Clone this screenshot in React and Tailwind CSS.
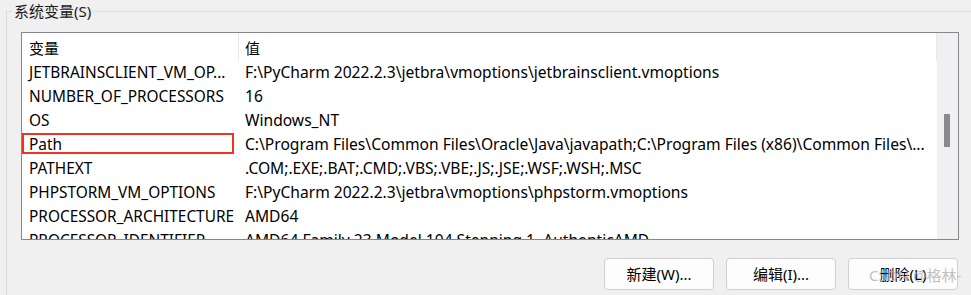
import React from 'react';

const rows = [
  ['JETBRAINSCLIENT_VM_OP...', 'F:\\PyCharm 2022.2.3\\jetbra\\vmoptions\\jetbrainsclient.vmoptions'],
  ['NUMBER_OF_PROCESSORS', '16'],
  ['OS', 'Windows_NT'],
  ['Path', 'C:\\Program Files\\Common Files\\Oracle\\Java\\javapath;C:\\Program Files (x86)\\Common Files\\...'],
  ['PATHEXT', '.COM;.EXE;.BAT;.CMD;.VBS;.VBE;.JS;.JSE;.WSF;.WSH;.MSC'],
  ['PHPSTORM_VM_OPTIONS', 'F:\\PyCharm 2022.2.3\\jetbra\\vmoptions\\phpstorm.vmoptions'],
  ['PROCESSOR_ARCHITECTURE', 'AMD64'],
  ['PROCESSOR_IDENTIFIER', 'AMD64 Family 23 Model 104 Stepping 1, AuthenticAMD'],
];

const font = { fontFamily: '"Noto Sans", "Noto Sans CJK SC", sans-serif' };

export default function App() {
  return (
    <div className="h-[295px] w-[971px] overflow-hidden bg-[#f0f0f0] text-black" style={font}>
      <div className="relative ml-[6px] mt-[11px] h-[300px] border-l border-t border-[#dcdcdc]">
        <span className="absolute left-[5px] top-[-12px] bg-[#f0f0f0] px-[2px] text-[15px] leading-[22px] text-[#1a1a1a]">
          系统变量(S)
        </span>

        <div className="ml-[14px] mt-[20px] flex h-[208px] w-[938px] border border-[#828790] bg-white">
          <div className="flex-1 overflow-hidden">
            <div className="flex h-[28px] items-center text-[15px]">
              <div className="flex h-full w-[217px] shrink-0 items-center border-r border-[#e8e8e8] pl-[7px] pt-[2px]">变量</div>
              <div className="flex h-full flex-1 items-center border-r border-[#e8e8e8] pl-[6px] pt-[2px]">值</div>
            </div>
            {rows.map(([name, value]) => (
              <div key={name} className="flex h-[24px] items-center whitespace-nowrap text-[15.4px]">
                <div className="relative flex h-full w-[217px] shrink-0 items-center pl-[7px]">
                  {name}
                  {name === 'Path' && (
                    <div className="absolute left-0 top-[0px] h-[21px] w-[212px] border-2 border-[#ee3322]" />
                  )}
                </div>
                <div className="flex h-full flex-1 items-center overflow-hidden pl-[6px] text-[15.6px]">{value}</div>
              </div>
            ))}
          </div>
          <div className="w-[21px] shrink-0 bg-[#f0f0f0] pl-[7px] pt-[81px]">
            <div className="h-[33px] w-[6px] bg-[#8a8a8a]" />
          </div>
        </div>

        <div className="relative ml-[597px] mt-[18px] flex gap-[12px]">
          {['新建(W)...', '编辑(I)...', '删除(L)'].map((label) => (
            <button
              key={label}
              className="flex h-[32px] w-[110px] items-center justify-center rounded-[4px] border border-[#d0d0d0] bg-[#fdfdfd] text-[15px]"
            >
              {label}
            </button>
          ))}
          <span className="pointer-events-none absolute left-[265px] top-[6px] text-[15px] text-[#b0b0b0]/80">
            CSDN @格林-
          </span>
        </div>
      </div>
    </div>
  );
}
